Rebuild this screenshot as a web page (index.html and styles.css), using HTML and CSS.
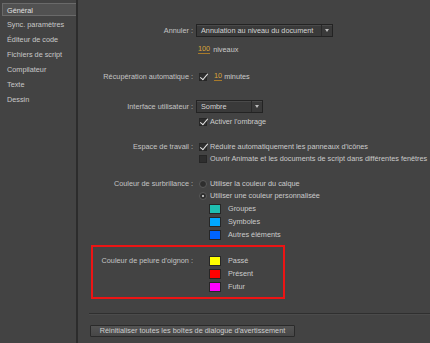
FILE: index.html
```html
<!DOCTYPE html>
<html lang="fr">
<head>
    <meta charset="UTF-8">
    <meta name="viewport" content="width=device-width, initial-scale=1.0">
    <title>Préférences - Général</title>
    <link rel="stylesheet" href="styles.css">
</head>
<body>
    <div class="app">
        <nav class="sidebar">
            <div class="nav-item active">Général</div>
            <div class="nav-item">Sync. paramètres</div>
            <div class="nav-item">Éditeur de code</div>
            <div class="nav-item">Fichiers de script</div>
            <div class="nav-item">Compilateur</div>
            <div class="nav-item">Texte</div>
            <div class="nav-item">Dessin</div>
        </nav>

        <main class="prefs">
            <div class="row row-undo">
                <label class="label">Annuler :</label>
                <div class="controls">
                    <div class="select select-wide">
                        <span class="select-text">Annulation au niveau du document</span>
                        <span class="select-arrow"></span>
                    </div>
                    <div class="line line-levels"><span class="num">100</span> niveaux</div>
                </div>
            </div>

            <div class="row row-recover">
                <label class="label">Récupération automatique :</label>
                <div class="controls">
                    <div class="line">
                        <span class="check on"></span>
                        <span class="num num-min">10</span> minutes
                    </div>
                </div>
            </div>

            <div class="row row-ui">
                <label class="label">Interface utilisateur :</label>
                <div class="controls">
                    <div class="select select-small">
                        <span class="select-text">Sombre</span>
                        <span class="select-arrow"></span>
                    </div>
                    <div class="opt opt-shade"><span class="check on"></span>Activer l'ombrage</div>
                </div>
            </div>

            <div class="row row-space">
                <label class="label opt-label">Espace de travail :</label>
                <div class="controls">
                    <div class="opt"><span class="check on"></span>Réduire automatiquement les panneaux d'icônes</div>
                    <div class="opt"><span class="check"></span>Ouvrir Animate et les documents de script dans différentes fenêtres</div>
                </div>
            </div>

            <div class="row row-highlight">
                <label class="label opt-label">Couleur de surbrillance :</label>
                <div class="controls">
                    <div class="opt"><span class="radio"></span>Utiliser la couleur du calque</div>
                    <div class="opt"><span class="radio on"></span>Utiliser une couleur personnalisée</div>
                    <div class="swatches">
                        <div class="swatch-item"><span class="swatch" style="background:#1ebfb1"></span>Groupes</div>
                        <div class="swatch-item"><span class="swatch" style="background:#00a8ff"></span>Symboles</div>
                        <div class="swatch-item"><span class="swatch" style="background:#0064ff"></span>Autres éléments</div>
                    </div>
                </div>
            </div>

            <div class="row row-onion">
                <label class="label swatch-label">Couleur de pelure d'oignon :</label>
                <div class="controls">
                    <div class="swatches">
                        <div class="swatch-item"><span class="swatch" style="background:#ffff00"></span>Passé</div>
                        <div class="swatch-item"><span class="swatch" style="background:#ff0000"></span>Présent</div>
                        <div class="swatch-item"><span class="swatch" style="background:#ff00ff"></span>Futur</div>
                    </div>
                </div>
            </div>

            <hr class="sep">

            <button class="reset-btn">Réinitialiser toutes les boîtes de dialogue d'avertissement</button>
        </main>
    </div>
</body>
</html>
```

FILE: styles.css
```css
body {
    margin: 0;
    background: #434343;
    color: #cbcbcb;
    font-family: 'Liberation Sans', Arial, sans-serif;
    font-size: 7.3px;
    overflow: hidden;
}
.app {
    display: flex;
    height: 343px;
    width: 430px;
}
.sidebar {
    width: 78px;
    padding-top: 2px;
    border-right: 2px solid #2c2c2c;
    box-sizing: border-box;
    flex-shrink: 0;
}
.nav-item {
    height: 15px;
    line-height: 15px;
    padding-left: 7px;
    color: #c8c8c8;
    white-space: nowrap;
}
.nav-item.active {
    margin: 1px 0 1px 2px;
    height: 13px;
    line-height: 13px;
    padding-left: 4px;
    background: #515151;
    border: 1px solid #6a6a6a;
    border-right: none;
    box-sizing: border-box;
    color: #e0e0e0;
}
.prefs {
    flex: 1;
    padding-top: 24px;
    min-width: 0;
}
.row {
    display: grid;
    grid-template-columns: 115px 1fr;
    column-gap: 5px;
}
.label {
    text-align: right;
    white-space: nowrap;
    line-height: 13px;
    color: #c4c4c4;
}
.opt-label {
    line-height: 12px;
}
.controls {
    white-space: nowrap;
    min-width: 0;
}
.select {
    display: flex;
    height: 13px;
    box-sizing: border-box;
    background: #3a3a3a;
    border: 1px solid #232323;
    box-shadow: inset 0 1px 0 #4a4a4a;
    color: #d4d4d4;
    margin-left: -2px;
}
.select-wide { width: 137px; }
.select-small { width: 67px; }
.select-text {
    flex: 1;
    padding-left: 4px;
    line-height: 11px;
}
.select-arrow {
    width: 10px;
    border-left: 1px solid #2a2a2a;
    position: relative;
}
.select-arrow::after {
    content: "";
    position: absolute;
    left: 3px;
    top: 4px;
    border-left: 2px solid transparent;
    border-right: 2px solid transparent;
    border-top: 3px solid #bdbdbd;
}
.line {
    height: 13px;
    line-height: 13px;
    display: flex;
    align-items: center;
}
.line-levels {
    margin-top: 6px;
}
.num {
    color: #dba43a;
    border-bottom: 1px solid #a87a2a;
    line-height: 8px;
    margin-right: 3px;
}
.num-min {
    margin-left: 7px;
    margin-right: 2px;
}
.row-recover { margin-top: 14px; }
.row-ui { margin-top: 17px; }
.row-space { margin-top: 13px; }
.row-highlight { margin-top: 13px; }
.opt {
    height: 12px;
    line-height: 12px;
    display: flex;
    align-items: center;
}
.opt-shade {
    margin-top: 3px;
}
.check, .radio {
    width: 8px;
    height: 8px;
    box-sizing: border-box;
    background: #2e2e2e;
    border: 1px solid #262626;
    margin: 0 3px 0 1px;
    position: relative;
    flex-shrink: 0;
}
.row-recover .check { margin-right: 0; }
.check.on::after {
    content: "";
    position: absolute;
    left: 2px;
    top: -2px;
    width: 3px;
    height: 7px;
    border-right: 1px solid #e6e6e6;
    border-bottom: 1px solid #e6e6e6;
    transform: rotate(40deg);
}
.radio {
    border-radius: 50%;
    border-color: #5a5a5a;
}
.radio.on::after {
    content: "";
    position: absolute;
    left: 2px;
    top: 2px;
    width: 2px;
    height: 2px;
    border-radius: 50%;
    background: #e0e0e0;
}
.swatches {
    padding-left: 11px;
}
.swatch-item {
    height: 13px;
    line-height: 13px;
    display: flex;
    align-items: center;
}
.swatch {
    width: 12px;
    height: 10px;
    box-sizing: border-box;
    border: 1px solid #262626;
    margin-right: 7px;
}
.row-onion {
    margin: 4px 0 0 13px;
    width: 194px;
    box-sizing: border-box;
    border: 2px solid #ec1414;
    padding: 7px 0 4px;
    grid-template-columns: 100px 1fr;
}
.swatch-label {
    line-height: 13px;
}
.sep {
    margin: 14px 0 0 11px;
    border: none;
    border-top: 1px solid #2f2f2f;
    border-bottom: 1px solid #4b4b4b;
    height: 0;
}
.reset-btn {
    display: block;
    margin: 10px 0 0 12px;
    width: 205px;
    height: 12px;
    padding: 0;
    font-family: inherit;
    font-size: 7.3px;
    line-height: 10px;
    color: #cdcdcd;
    background: linear-gradient(#535353, #474747);
    border: 1px solid #2a2a2a;
    border-radius: 1px;
}
```
